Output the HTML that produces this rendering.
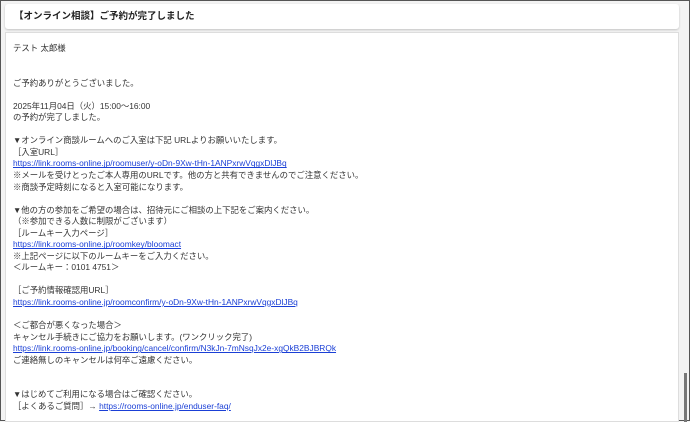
<!DOCTYPE html>
<html><head><meta charset="utf-8"><style>
html,body{margin:0;padding:0}
body{width:690px;height:421px;background:#f3f3f3;position:relative;overflow:hidden;box-sizing:border-box;border:1px solid #555;font-family:"Liberation Sans","Noto Sans CJK JP",sans-serif;color:#333}
.hdr{position:absolute;left:4px;top:3px;width:674px;height:25px;background:#fff;border-radius:3px;box-shadow:0 1px 2px rgba(0,0,0,.2);font-size:9.5px;font-weight:bold;line-height:25px;padding-left:9px;box-sizing:border-box;color:#222}
.body{position:absolute;left:4px;top:31px;width:674px;height:390px;background:#fff;border:1px solid #ddd;box-sizing:border-box;padding:10px 0 0 7px;font-size:8.4px;color:#333}
.body div{height:11.55px;line-height:11.55px;white-space:pre;overflow:visible}
a{color:#1a3fd6;text-decoration:underline}
.sb{position:absolute;left:683px;top:372px;width:3px;height:49px;background:#777}
</style></head><body>
<div class="hdr">【オンライン相談】ご予約が完了しました</div>
<div class="body">
<div>テスト 太郎様</div>
<div></div>
<div></div>
<div>ご予約ありがとうございました。</div>
<div></div>
<div>2025年11月04日（火）15:00～16:00</div>
<div>の予約が完了しました。</div>
<div></div>
<div>▼オンライン商談ルームへのご入室は下記 URLよりお願いいたします。</div>
<div>［入室URL］</div>
<div><a>https://link.rooms-online.jp/roomuser/y-oDn-9Xw-tHn-1ANPxrwVqgxDlJBq</a></div>
<div>※メールを受けとったご本人専用のURLです。他の方と共有できませんのでご注意ください。</div>
<div>※商談予定時刻になると入室可能になります。</div>
<div></div>
<div>▼他の方の参加をご希望の場合は、招待元にご相談の上下記をご案内ください。</div>
<div>（※参加できる人数に制限がございます）</div>
<div>［ルームキー入力ページ］</div>
<div><a>https://link.rooms-online.jp/roomkey/bloomact</a></div>
<div>※上記ページに以下のルームキーをご入力ください。</div>
<div>＜ルームキー：0101 4751＞</div>
<div></div>
<div>［ご予約情報確認用URL］</div>
<div><a>https://link.rooms-online.jp/roomconfirm/y-oDn-9Xw-tHn-1ANPxrwVqgxDlJBq</a></div>
<div></div>
<div>＜ご都合が悪くなった場合＞</div>
<div>キャンセル手続きにご協力をお願いします。(ワンクリック完了)</div>
<div><a>https://link.rooms-online.jp/booking/cancel/confirm/N3kJn-7mNsqJx2e-xgQkB2BJBRQk</a></div>
<div>ご連絡無しのキャンセルは何卒ご遠慮ください。</div>
<div></div>
<div></div>
<div>▼はじめてご利用になる場合はご確認ください。</div>
<div>［よくあるご質問］→ <a>https://rooms-online.jp/enduser-faq/</a></div>
</div>
<div class="sb"></div>
</body></html>
